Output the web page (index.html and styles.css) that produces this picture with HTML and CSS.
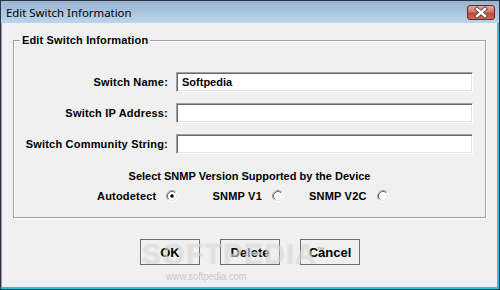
FILE: index.html
```html
<!DOCTYPE html>
<html>
<head>
<meta charset="utf-8">
<link rel="stylesheet" href="styles.css">
</head>
<body>
<div class="window">
  <div class="titlebar">
    <span class="title">Edit Switch Information</span>
    <span class="close">
      <svg width="28" height="15" viewBox="0 0 28 15">
        <path d="M10 4 L18 11 M18 4 L10 11" stroke="#4a4a4a" stroke-width="4.2" stroke-linecap="square"/>
        <path d="M10 4 L18 11 M18 4 L10 11" stroke="#ffffff" stroke-width="2.4" stroke-linecap="square"/>
      </svg>
    </span>
  </div>
  <div class="client">
    <fieldset class="group">
      <legend>Edit Switch Information</legend>
      <div class="form">
        <label class="lbl">Switch Name:</label>
        <div class="field">Softpedia</div>
        <label class="lbl">Switch IP Address:</label>
        <div class="field"></div>
        <label class="lbl">Switch Community String:</label>
        <div class="field"></div>
      </div>
      <div class="snmp-title">Select SNMP Version Supported by the Device</div>
      <div class="radios">
        <span class="rlabel">Autodetect</span>
        <svg class="radio" width="12" height="12" viewBox="0 0 12 12">
          <circle cx="6" cy="6" r="4.5" fill="#fff"/>
          <path d="M2.11 9.89 A5.5 5.5 0 0 1 9.89 2.11" fill="none" stroke="#a0a0a0"/>
          <path d="M9.89 2.11 A5.5 5.5 0 0 1 2.11 9.89" fill="none" stroke="#ffffff"/>
          <path d="M2.82 9.18 A4.5 4.5 0 0 1 9.18 2.82" fill="none" stroke="#696969"/>
          <path d="M9.18 2.82 A4.5 4.5 0 0 1 2.82 9.18" fill="none" stroke="#e3e3e3"/>
          <circle cx="6" cy="6" r="1.8" fill="#000"/>
        </svg>
        <span class="rlabel gap1">SNMP V1</span>
        <svg class="radio" width="12" height="12" viewBox="0 0 12 12">
          <circle cx="6" cy="6" r="4.5" fill="#fff"/>
          <path d="M2.11 9.89 A5.5 5.5 0 0 1 9.89 2.11" fill="none" stroke="#a0a0a0"/>
          <path d="M9.89 2.11 A5.5 5.5 0 0 1 2.11 9.89" fill="none" stroke="#ffffff"/>
          <path d="M2.82 9.18 A4.5 4.5 0 0 1 9.18 2.82" fill="none" stroke="#696969"/>
          <path d="M9.18 2.82 A4.5 4.5 0 0 1 2.82 9.18" fill="none" stroke="#e3e3e3"/>
        </svg>
        <span class="rlabel gap2">SNMP V2C</span>
        <svg class="radio" width="12" height="12" viewBox="0 0 12 12">
          <circle cx="6" cy="6" r="4.5" fill="#fff"/>
          <path d="M2.11 9.89 A5.5 5.5 0 0 1 9.89 2.11" fill="none" stroke="#a0a0a0"/>
          <path d="M9.89 2.11 A5.5 5.5 0 0 1 2.11 9.89" fill="none" stroke="#ffffff"/>
          <path d="M2.82 9.18 A4.5 4.5 0 0 1 9.18 2.82" fill="none" stroke="#696969"/>
          <path d="M9.18 2.82 A4.5 4.5 0 0 1 2.82 9.18" fill="none" stroke="#e3e3e3"/>
        </svg>
      </div>
    </fieldset>
    <div class="buttons">
      <button class="btn">OK</button>
      <button class="btn">Delete</button>
      <button class="btn">Cancel</button>
    </div>
    <div class="wm-logo">SOFTPEDIA<sup>™</sup></div>
    <div class="wm-url">www.softpedia.com</div>
  </div>
</div>
</body>
</html>
```

FILE: styles.css
```css
html, body {
  margin: 0;
  padding: 0;
  background: #f0f0f0;
}
.window {
  width: 500px;
  height: 290px;
  box-sizing: border-box;
  border: 1px solid #2b3642;
  background: #3cb6e6;
  display: flex;
  flex-direction: column;
  font-family: "Liberation Sans", Arial, sans-serif;
}
.titlebar {
  height: 22px;
  flex: none;
  display: flex;
  justify-content: space-between;
  align-items: flex-start;
  background: linear-gradient(#99b4d1, #bcd4ec);
}
.title {
  font-family: "Noto Sans", "DejaVu Sans", sans-serif;
  font-size: 11.4px;
  line-height: 16px;
  color: #000;
  margin: 4px 0 0 5px;
}
.close {
  width: 28px;
  height: 15px;
  box-sizing: border-box;
  margin: 4px 4px 0 0;
  border: 1px solid #6d2a25;
  border-radius: 3px;
  background: linear-gradient(#e3a899 0%, #d27a6a 45%, #c04a3a 55%, #cf6a50 100%);
  display: flex;
  align-items: center;
  justify-content: center;
  overflow: hidden;
}
.close svg {
  display: block;
  margin: -1px;
}
.client {
  flex: 1;
  margin: 0 2px 2px 1px;
  background: #f0f0f0;
  position: relative;
  display: flex;
  flex-direction: column;
}
.group {
  margin: 11px 11px 0 11px;
  padding: 0 0 14px 0;
  border: 1px solid #a0a0a0;
  box-shadow: 1px 1px 0 #fff, inset 1px 1px 0 #fff;
  min-width: 0;
}
.group legend {
  margin-left: 6px;
  padding: 0 2px;
  font-size: 11px;
  line-height: 13px;
  font-weight: bold;
  letter-spacing: 0.15px;
  color: #000;
}
.form {
  display: grid;
  grid-template-columns: 154px 297px;
  column-gap: 8px;
  row-gap: 11px;
  padding: 25px 12px 0 0;
  align-items: center;
}
.lbl {
  text-align: right;
  font-size: 11px;
  font-weight: bold;
  letter-spacing: 0.2px;
  color: #000;
}
.field {
  height: 20px;
  box-sizing: border-box;
  background: #fff;
  border: 1px solid;
  border-color: #a0a0a0 #fff #fff #a0a0a0;
  box-shadow: inset 1px 1px 0 #696969, inset -1px -1px 0 #e3e3e3;
  font-size: 11px;
  font-weight: bold;
  line-height: 17px;
  padding: 1px 0 0 5px;
  color: #000;
}
.snmp-title {
  margin-top: 16px;
  text-align: center;
  font-size: 11px;
  line-height: 13px;
  font-weight: bold;
}
.radios {
  display: flex;
  align-items: center;
  margin: 6px 0 0 83px;
  height: 14px;
}
.rlabel {
  font-size: 11px;
  font-weight: bold;
  letter-spacing: 0.2px;
  margin-right: 10px;
}
.radio {
  display: block;
}
.gap1 {
  margin-left: 34px;
}
.gap2 {
  margin-left: 25px;
}
.buttons {
  display: flex;
  justify-content: center;
  gap: 20px;
  margin-top: 21px;
  padding-left: 1px;
}
.btn {
  width: 60px;
  height: 26px;
  box-sizing: border-box;
  border: 1px solid #6e6e6e;
  background: #f0f0f0;
  font-family: "Liberation Sans", Arial, sans-serif;
  font-size: 13px;
  font-weight: bold;
  color: #000;
  padding: 0;
  margin: 0;
}
.wm-logo {
  position: absolute;
  left: 140px;
  top: 215px;
  font-family: "Liberation Sans", Arial, sans-serif;
  font-size: 29px;
  font-weight: bold;
  letter-spacing: 1px;
  color: rgba(255, 255, 255, 0.45);
  text-shadow: 0 0 1px rgba(140, 140, 140, 0.4);
  pointer-events: none;
}
.wm-logo sup {
  font-size: 8px;
  color: rgba(160, 160, 160, 0.6);
}
.wm-url {
  position: absolute;
  left: 164px;
  top: 247px;
  font-family: "Liberation Sans Narrow", "Liberation Sans", Arial, sans-serif;
  font-size: 11px;
  color: #c8c8c8;
  transform: scaleX(0.85);
  transform-origin: left;
}
```
